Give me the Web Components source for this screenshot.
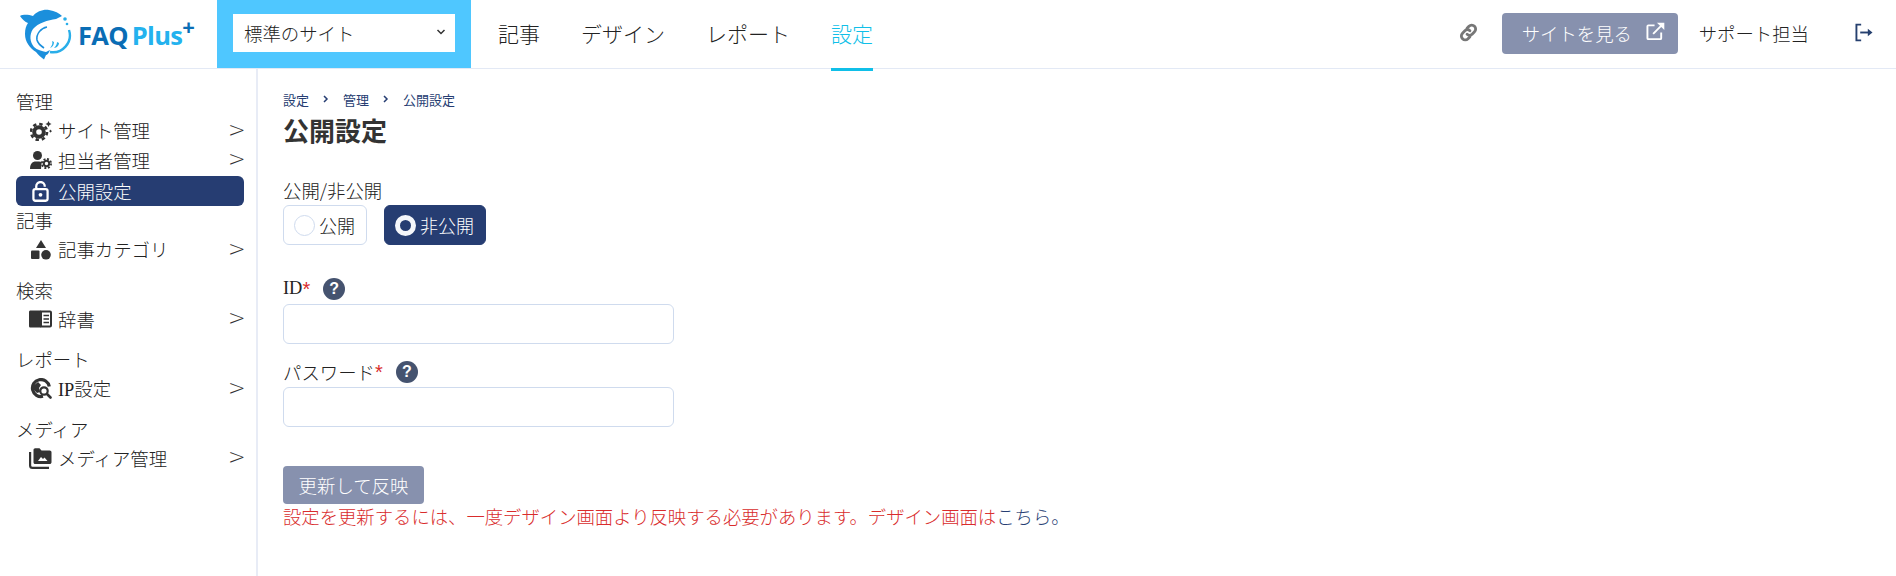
<!DOCTYPE html>
<html lang="ja">
  <head>
    <meta charset="UTF-8" />
    <title>公開設定</title>
    <style>
      html, body { margin: 0; padding: 0; background: #fff; }
      body { font-family: "Noto Sans CJK JP", "Liberation Sans", sans-serif; font-weight: 300; color: #222; font-size: 18.4px; }
    </style>
  </head>
  <body>
    <faq-app></faq-app>

    <script>
      const ICONS = {
        gear: `<svg viewBox="0 0 22 20" width="22" height="20"><circle cx="9" cy="11" r="4.800" fill="none" stroke="#333" stroke-width="4"/><circle cx="9" cy="11" r="8" fill="none" stroke="#333" stroke-width="2.600" stroke-dasharray="3.400 2.880"/><path fill="#333" d="M18.500 0l1 2 2 1-2 1-1 2-1-2-2-1 2-1zM20.500 8.500l.6 1 1 .6-1 .6-.6 1-.6-1-1-.6 1-.6z"/></svg>`,
        staff: `<svg viewBox="0 0 22 18" width="22" height="18"><circle cx="7.500" cy="4.500" r="4.500" fill="#333"/><path fill="#333" d="M0 18c0-5 2-7.500 6-7.500h3c1.200 0 2 .2 2.700.6L11 18z"/><circle cx="16.500" cy="12.500" r="2.700" fill="none" stroke="#333" stroke-width="2"/><circle cx="16.500" cy="12.500" r="4.600" fill="none" stroke="#333" stroke-width="1.800" stroke-dasharray="2 1.610"/></svg>`,
        lock: `<svg viewBox="0 0 18 22" width="17" height="21"><path fill="none" stroke="#fff" stroke-width="2.400" d="M4.500 9V5.500a4.500 4.500 0 0 1 9 0V6"/><rect x="1.500" y="8.500" width="15" height="12.300" rx="2" fill="none" stroke="#fff" stroke-width="2.400"/><circle cx="9" cy="14.500" r="2" fill="#fff"/></svg>`,
        shapes: `<svg viewBox="0 0 20 20" width="20" height="20"><path fill="#333" d="M10 0l5 8H5z"/><rect x="0" y="10.500" width="8.500" height="8.500" rx="1" fill="#333"/><circle cx="15" cy="14.800" r="4.800" fill="#333"/></svg>`,
        book: `<svg viewBox="0 0 23 18" width="23" height="18"><path fill="#333" d="M0 2c0-1 .7-1.500 1.500-1.500H11.500v17H1.500C.7 17.500 0 17 0 16z"/><path fill="#fff" stroke="#333" stroke-width="2" d="M12 1.500h9c.6 0 1 .4 1 1v13c0 .6-.4 1-1 1h-9z"/><path stroke="#333" stroke-width="1.500" d="M14.500 5.500H20M14.500 9H20M14.500 12.500H20"/></svg>`,
        globe: `<svg viewBox="0 0 22 22" width="22" height="22"><path fill="none" stroke="#333" stroke-width="3.200" d="M13 18.300A8.500 8.500 0 1 1 19.300 8.500"/><path fill="#333" d="M3 8l5-4 3 3-2 3 1 4-3 1-4-4z"/><circle cx="14" cy="13" r="3.700" fill="#fff" stroke="#333" stroke-width="2.200"/><path stroke="#333" stroke-width="2.600" stroke-linecap="round" d="M17 16l3.500 3.500"/></svg>`,
        media: `<svg viewBox="0 0 23 21" width="23" height="21"><path fill="none" stroke="#333" stroke-width="2.200" d="M1.100 4v13.500c0 1.500.8 2.400 2.400 2.400H20"/><path fill="#333" d="M4.500 2c0-1 .7-1.800 1.700-1.800h4.300l2 2.300h8.200c1 0 1.800.8 1.800 1.800v9.900c0 1-.8 1.800-1.800 1.800H6.200c-1 0-1.700-.8-1.700-1.800z"/><path fill="#fff" d="M9 13l3-4 2 2 1.500-1.500L18.500 13z"/></svg>`,
        link: `<svg viewBox="0 0 20 20" width="19" height="19"><g fill="none" stroke="#777" stroke-width="3" stroke-linecap="round"><path d="M8.500 5.500l2-2a3.800 3.800 0 0 1 5.800 5.800l-2.500 2.500a3.800 3.800 0 0 1-5.300 0"/><path d="M11.500 14.500l-2 2a3.800 3.800 0 0 1-5.800-5.800l2.500-2.500a3.800 3.800 0 0 1 5.300 0"/></g></svg>`,
        external: `<svg viewBox="0 0 20 20" width="19" height="19"><g fill="none" stroke="#fff" stroke-width="2"><path d="M9 3.500H2.500a1 1 0 0 0-1 1v12.500a1 1 0 0 0 1 1H15a1 1 0 0 0 1-1V11"/><path d="M7.500 12.500L18 2"/></g><path fill="#fff" d="M11.500 .7H19.300V8.500z"/></svg>`,
        logout: `<svg viewBox="0 0 19 19" width="18" height="19"><g fill="none" stroke="#26406f" stroke-width="2"><path d="M6.500 1.200H1.500v16.600h5"/><path d="M5.500 9.500H14"/></g><path fill="#26406f" d="M13.500 5.500l5 4-5 4z"/></svg>`,
      };

      // top bar
      class FaqLogo extends HTMLElement {
        constructor() {
          super();
          this.attachShadow({ mode: "open" }).innerHTML = `
            <style>
              :host { display: flex; align-items: center; width: 217px; padding-left: 19px; box-sizing: border-box; gap: 6px; }
              svg { display: block; flex: none; margin-top: 0; }
              .name { font: 700 25.500px/1 "Open Sans", "Liberation Sans", sans-serif; letter-spacing: -.7px; color: #0a6db5; white-space: nowrap; margin-top: 4px; }
              .plus { color: #24b2ee; margin-left: 4px; }
              sup { font-size: 22px; line-height: 0; color: #0a6db5; vertical-align: 10px; margin-left: 0; }
            </style>
            <svg viewBox="19 7 53 53" width="53" height="53">
              <path fill="none" stroke="#29aee9" stroke-width="2.400" d="M69 29a17 17 0 0 1-19 22"/>
              <path fill="#1b8fdc" d="M20 15C24 13 29 14 33 15 37 10 44 8 49 9 55 10 59 12 62 15L56 18C48 19 38 22 33 28 29 34 30 41 34 46 37 49 42 50 46 51L50 49C49 52 47 54 46 54L44 58.500C41 56 38 54 36 51 30 47 25 41 25 33 25 28 26 25 28 22 25 21 22 18 20 15Z"/>
              <path fill="none" stroke="#1b8fdc" stroke-width="1.600" d="M47 26C41 27 36 33 37 39 38 43 41 45 44 47"/>
              <circle cx="65" cy="18" r="1.800" fill="#29aee9"/><circle cx="67" cy="23" r="1.300" fill="#29aee9"/>
              <path fill="#29aee9" d="M52 40c1 2 0 5-2 7 3-1 4-4 4-6zM57 41c0 2-1 4-3 6 3 0 5-3 5-5z"/>
            </svg>
            <div class="name">FAQ<span class="plus">Plus</span><sup>+</sup></div>`;
        }
      }

      class SiteSelect extends HTMLElement {
        constructor() {
          super();
          this.attachShadow({ mode: "open" }).innerHTML = `
            <style>
              :host { display: block; background: #4fc7ff; padding: 14px 16px 16px; width: 254px; box-sizing: border-box; }
              .box { background: #fff; height: 38px; display: flex; align-items: center; justify-content: space-between; padding: 0 9px 0 11px; font-size: 18.400px; color: #222; }
              svg { display: block; margin-top: -3px; }
            </style>
            <div class="box"><slot></slot><svg viewBox="0 0 10 6" width="10" height="6"><path fill="none" stroke="#333" stroke-width="1.500" d="M1.500 1l3.500 3.500L8.500 1"/></svg></div>`;
        }
      }

      class TopLink extends HTMLElement {
        constructor() {
          super();
          this.attachShadow({ mode: "open" }).innerHTML = `
            <style>
              :host { display: flex; align-items: center; height: 69px; margin-bottom: -1px; position: relative; font-size: 21px; color: #222; box-sizing: border-box; padding-bottom: 4px; }
              :host([active]) { color: #10bfe8; }
              :host([active])::after { content: ""; position: absolute; left: 0; right: 0; bottom: -2px; height: 3px; background: #10bfe8; }
            </style>
            <slot></slot>`;
        }
      }

      class AppHeader extends HTMLElement {
        constructor() {
          super();
          this.attachShadow({ mode: "open" }).innerHTML = `
            <style>
              :host { display: flex; height: 69px; border-bottom: 1px solid #e3e9f5; box-sizing: border-box; }
              nav { display: flex; gap: 41px; margin-left: 27px; }
              .right { margin-left: auto; display: flex; align-items: center; padding-right: 23px; font-size: 18.400px; color: #222; }
              .view { display: flex; align-items: center; background: #8791ae; color: #fff; height: 41px; width: 176px; border-radius: 4px; box-sizing: border-box; padding-left: 20px; margin: 0 21px 0 24px; gap: 14px; margin-bottom: 2px; }
              .view svg { margin-top: -3px; }
              .support { margin-right: 46px; margin-bottom: 2px; }
              svg { display: block; }
              .right > svg { margin-bottom: 3px; }
            </style>
            <faq-logo></faq-logo>
            <site-select>標準のサイト</site-select>
            <nav>
              <top-link>記事</top-link>
              <top-link>デザイン</top-link>
              <top-link>レポート</top-link>
              <top-link active>設定</top-link>
            </nav>
            <div class="right">
              ${ICONS.link}
              <div class="view">サイトを見る${ICONS.external}</div>
              <div class="support">サポート担当</div>
              ${ICONS.logout}
            </div>`;
        }
      }

      // sidebar
      class NavGroup extends HTMLElement {
        static get observedAttributes() { return ["label"]; }
        constructor() {
          super();
          this.attachShadow({ mode: "open" }).innerHTML = `
            <style>
              :host { display: block; margin-bottom: 10px; }
              :host([tight]) { margin-bottom: 0; }
              .label { height: 30px; line-height: 30px; font-size: 18.400px; color: #222; }
            </style>
            <div class="label"></div>
            <slot></slot>`;
        }
        attributeChangedCallback(name, oldValue, newValue) {
          this.shadowRoot.querySelector(".label").textContent = newValue;
        }
      }

      class NavItem extends HTMLElement {
        constructor() {
          super();
          const icon = ICONS[this.getAttribute("icon")] || "";
          this.attachShadow({ mode: "open" }).innerHTML = `
            <style>
              :host { display: flex; align-items: center; height: 29.500px; font-size: 18.400px; color: #222; border-radius: 6px; }
              :host([active]) { background: #263d72; color: #fff; height: 30px; margin-top: 1px; margin-bottom: -1px; }
              .icon { width: 23px; margin-left: 13px; margin-right: 6px; display: flex; justify-content: center; flex: none; }
              .text { flex: 1; white-space: nowrap; margin-top: -1px; }
              .arrow { font: 300 21px/1 "DejaVu Sans", sans-serif; color: #333; width: 14px; margin-right: 2px; margin-top: -1px; }
              svg { display: block; }
            </style>
            <span class="icon">${icon}</span>
            <span class="text"><slot></slot></span>
            ${this.hasAttribute("active") ? "" : '<span class="arrow">&gt;</span>'}`;
        }
      }

      class SideNav extends HTMLElement {
        constructor() {
          super();
          this.attachShadow({ mode: "open" }).innerHTML = `
            <style>
              :host { display: block; width: 258px; box-sizing: border-box; border-right: 2px solid #e8ecf6; padding: 17px 12px 0 16px; height: 507px; flex: none; }
            </style>
            <slot></slot>`;
        }
      }

      // form parts
      class RadioChip extends HTMLElement {
        constructor() {
          super();
          this.attachShadow({ mode: "open" }).innerHTML = `
            <style>
              :host { display: flex; align-items: center; height: 40px; box-sizing: border-box; border: 1px solid #cfdbee; border-radius: 6px; padding: 0 11px 0 10px; gap: 4px; font-size: 18px; color: #222; background: #fff; }
              :host([checked]) { background: #263d72; border-color: #263d72; color: #fff; }
              i { display: block; width: 21px; height: 21px; border-radius: 50%; box-sizing: border-box; border: 1px solid #cfdbee; background: #fff; }
              :host([checked]) i { border: 5px solid #f4f6fa; background: #263d72; }
            </style>
            <i></i><slot></slot>`;
        }
      }

      class HelpDot extends HTMLElement {
        constructor() {
          super();
          this.attachShadow({ mode: "open" }).innerHTML = `
            <style>
              :host { display: flex; width: 22px; height: 22px; border-radius: 50%; background: #45536f; color: #fff; align-items: center; justify-content: center; font: 700 16px/1 "Liberation Sans", sans-serif; flex: none; }
            </style>
            ?`;
        }
      }

      class FormField extends HTMLElement {
        constructor() {
          super();
          this.attachShadow({ mode: "open" }).innerHTML = `
            <style>
              :host { display: block; margin-bottom: 13px; }
              .label { display: flex; align-items: center; height: 29px; font-size: 18.400px; color: #222; margin-bottom: 1px; }
              em { font: 400 20px/1 "Liberation Sans", sans-serif; color: #d92c2c; }
              help-dot { margin-left: 13px; }
              input { display: block; width: 391px; height: 40px; box-sizing: border-box; border: 1px solid #cfdbee; border-radius: 6px; background: #fff; outline: 0; padding: 0 10px; }
            </style>
            <div class="label"><slot></slot><em>*</em><help-dot></help-dot></div>
            <input type="text" />`;
        }
      }

      class SettingsPage extends HTMLElement {
        constructor() {
          super();
          this.attachShadow({ mode: "open" }).innerHTML = `
            <style>
              :host { display: block; padding: 18px 0 0 25px; flex: 1; }
              .crumbs { display: flex; align-items: center; font-size: 13px; font-weight: 400; color: #263d72; height: 24px; }
              .crumbs svg { margin: 0 14px; display: block; }
              h1 { margin: 0; font-size: 26px; font-weight: 700; line-height: 36px; color: #333; margin-top: 1px; }
              .lbl { font-size: 18.400px; color: #222; line-height: 30px; margin-top: 27px; }
              .chips { display: flex; gap: 17px; margin-bottom: 29px; }
              .id { font-family: "Liberation Serif", serif; font-size: 18.400px; }
              button { display: block; font: inherit; width: 141px; height: 38px; border: 0; border-radius: 4px; background: #8791ae; color: #fff; font-size: 18.400px; padding: 0; margin-top: 39px; }
              p { margin: 0; color: #d92c2c; font-size: 18.350px; line-height: 26px; margin-top: -1px; white-space: nowrap; }
              a { color: #263d72; text-decoration: none; }
            </style>
            <div class="crumbs">設定${SettingsPage.chev}管理${SettingsPage.chev}公開設定</div>
            <h1>公開設定</h1>
            <div class="lbl">公開/非公開</div>
            <div class="chips">
              <radio-chip>公開</radio-chip>
              <radio-chip checked>非公開</radio-chip>
            </div>
            <form-field><span class="id">ID</span></form-field>
            <form-field>パスワード</form-field>
            <button type="button">更新して反映</button>
            <p>設定を更新するには、一度デザイン画面より反映する必要があります。デザイン画面は<a>こちら。</a></p>`;
        }
        static get chev() {
          return `<svg viewBox="0 0 6 8" width="6" height="8"><path fill="none" stroke="#263d72" stroke-width="1.500" d="M1 1l3 3-3 3"/></svg>`;
        }
      }

      class FaqApp extends HTMLElement {
        constructor() {
          super();
          this.attachShadow({ mode: "open" }).innerHTML = `
            <style>
              :host { display: block; }
              .main { display: flex; }
              .id { font-family: "Liberation Serif", serif; font-size: 18.400px; }
            </style>
            <app-header></app-header>
            <div class="main">
              <side-nav>
                <nav-group label="管理" tight>
                  <nav-item icon="gear">サイト管理</nav-item>
                  <nav-item icon="staff">担当者管理</nav-item>
                  <nav-item icon="lock" active>公開設定</nav-item>
                </nav-group>
                <nav-group label="記事">
                  <nav-item icon="shapes">記事カテゴリ</nav-item>
                </nav-group>
                <nav-group label="検索">
                  <nav-item icon="book">辞書</nav-item>
                </nav-group>
                <nav-group label="レポート">
                  <nav-item icon="globe"><span class="id">IP</span>設定</nav-item>
                </nav-group>
                <nav-group label="メディア">
                  <nav-item icon="media">メディア管理</nav-item>
                </nav-group>
              </side-nav>
              <settings-page></settings-page>
            </div>`;
        }
      }

      customElements.define("faq-logo", FaqLogo);
      customElements.define("site-select", SiteSelect);
      customElements.define("top-link", TopLink);
      customElements.define("app-header", AppHeader);
      customElements.define("nav-group", NavGroup);
      customElements.define("nav-item", NavItem);
      customElements.define("side-nav", SideNav);
      customElements.define("radio-chip", RadioChip);
      customElements.define("help-dot", HelpDot);
      customElements.define("form-field", FormField);
      customElements.define("settings-page", SettingsPage);
      customElements.define("faq-app", FaqApp);
    </script>
  </body>
</html>
